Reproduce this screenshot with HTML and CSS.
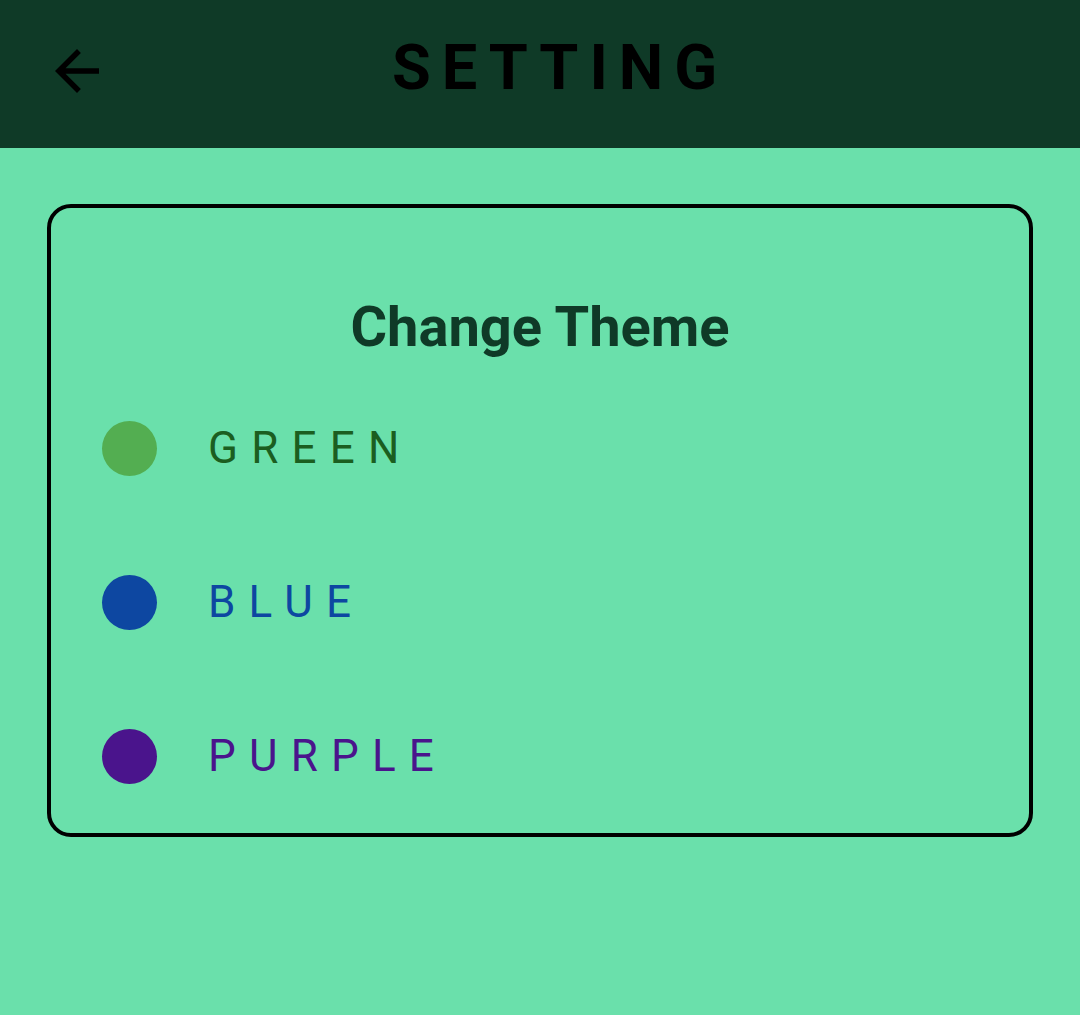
FILE: index.html
```html
<!DOCTYPE html>
<html>
<head>
<meta charset="utf-8">
<link rel="stylesheet" href="styles.css">
</head>
<body>
<header class="topbar">
  <svg class="back" viewBox="0 0 24 24" width="66" height="66"><path d="M20 11H7.83l5.59-5.59L12 4l-8 8 8 8 1.41-1.41L7.83 13H20v-2z" fill="#000"/></svg>
  <h1 class="title">SETTING</h1>
</header>
<main class="content">
  <section class="card">
    <h2 class="card-title">Change Theme</h2>
    <div class="row"><span class="dot dot-green"></span><span class="label label-green">GREEN</span></div>
    <div class="row"><span class="dot dot-blue"></span><span class="label label-blue">BLUE</span></div>
    <div class="row"><span class="dot dot-purple"></span><span class="label label-purple">PURPLE</span></div>
  </section>
</main>
</body>
</html>
```
FILE: styles.css
```css
html, body {
  margin: 0;
  padding: 0;
}
body {
  background: #6ae0ab;
  font-family: Roboto, "Liberation Sans", sans-serif;
  min-height: 1015px;
}
.topbar {
  height: 148px;
  background: #0f3a27;
  display: flex;
  align-items: center;
}
.back {
  margin-left: 44px;
  margin-top: -6px;
  flex: none;
}
.title {
  margin: -14px 0 0 282px;
  font-size: 63px;
  font-weight: 700;
  letter-spacing: 11px;
  color: #000;
  line-height: 1;
}
.content {
  padding: 56px 47px 0;
}
.card {
  border: 4px solid #000;
  border-radius: 24px;
  padding: 87px 0 0 51px;
}
.card-title {
  margin: 0 0 12px -51px;
  text-align: center;
  font-size: 56px;
  line-height: 64px;
  font-weight: 700;
  color: #0f3a27;
}
.row {
  height: 154px;
  display: flex;
  align-items: center;
}
.dot {
  width: 55px;
  height: 55px;
  border-radius: 50%;
  flex: none;
}
.dot-green { background: #53ae51; }
.dot-blue { background: #0d47a1; }
.dot-purple { background: #4a148c; }
.label {
  margin-left: 51px;
  font-size: 44px;
  letter-spacing: 0.3em;
}
.label-green { color: #1b5e20; }
.label-blue { color: #0d47a1; }
.label-purple { color: #4a148c; }
```
